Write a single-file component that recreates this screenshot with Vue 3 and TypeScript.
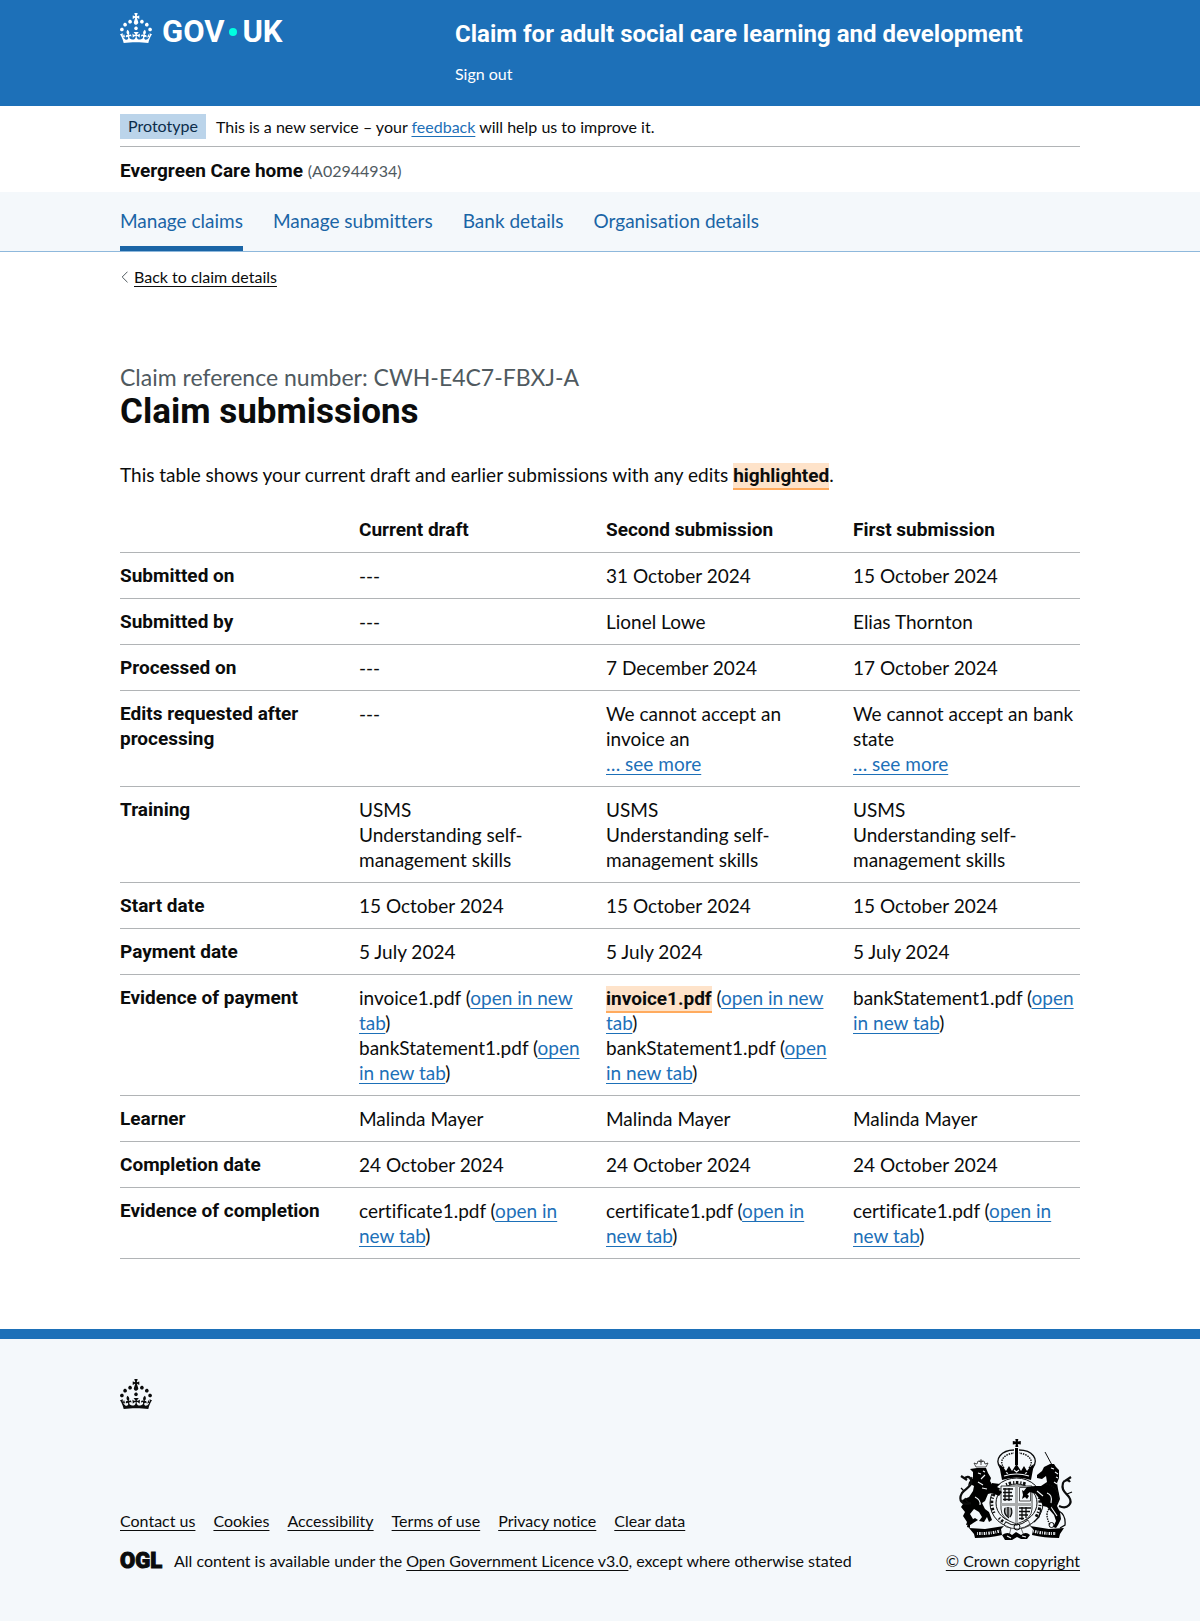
<script setup lang="ts">
interface FileLink { name: string; edited?: boolean }
interface Cell { lines?: string[]; more?: boolean; files?: FileLink[] }
interface Row { label: string; cells: Cell[] }

const crownPath =
  'M22.6 10.4c-1 .4-2-.1-2.4-1-.4-.9.1-2 1-2.4.9-.4 2 .1 2.4 1s-.1 2-1 2.4m-5.9 6.7c-.9.4-2-.1-2.4-1-.4-.9.1-2 1-2.4.9-.4 2 .1 2.4 1s-.1 2-1 2.4m10.8-3.7c-1 .4-2-.1-2.4-1-.4-.9.1-2 1-2.4.9-.4 2 .1 2.4 1s0 2-1 2.4m3.3 4.8c-1 .4-2-.1-2.4-1-.4-.9.1-2 1-2.4.9-.4 2 .1 2.4 1s-.1 2-1 2.4M17 4.7l2.3 1.2V2.5l-2.3.7-.2-.2.9-3h-3.4l.9 3-.2.2c-.1.1-2.3-.7-2.3-.7v3.4L15 4.7c.1.1.1.2.2.2l-1.3 4c-.1.2-.1.4-.1.6 0 1.1.8 2 1.9 2.2h.7c1-.2 1.9-1.1 1.9-2.1 0-.2 0-.4-.1-.6l-1.3-4c-.1-.2 0-.2.1-.3m-7.6 5.7c.9.4 2-.1 2.4-1 .4-.9-.1-2-1-2.4-.9-.4-2 .1-2.4 1s0 2 1 2.4m-5 3c.9.4 2-.1 2.4-1 .4-.9-.1-2-1-2.4-.9-.4-2 .1-2.4 1s.1 2 1 2.4m-3.2 4.8c.9.4 2-.1 2.4-1 .4-.9-.1-2-1-2.4-.9-.4-2 .1-2.4 1s0 2 1 2.4m14.8 11c4.4 0 8.6.3 12.3.8 1.1-4.5 2.4-7 3.7-8.8l-2.5-.9c.2 1.3.3 1.9 0 2.7-.4-.4-.8-1.1-1.1-2.3l-1.2 4c.7-.5 1.3-.8 2-.9-1.1 2.5-2.6 3.1-3.5 3-1.1-.2-1.7-1.2-1.5-2.1.3-1.2 1.5-1.5 2.1-.1 1.1-2.3-.8-3-2-2.3 1.9-1.9 2.1-3.5.6-5.6-2.1 1.6-2.1 3.2-1.2 5.5-1.2-1.4-3.2-.6-2.5 1.6.9-1.4 2.1-.5 1.9.8-.2 1.1-1.7 2.1-3.5 1.9-2.7-.2-2.9-2.1-2.9-3.6.7-.1 1.9.5 2.9 1.9l.4-4.3c-1.1 1.1-2.1 1.4-3.2 1.4.4-1.2 2.1-3 2.1-3h-5.4s1.7 1.9 2.1 3c-1.1 0-2.1-.2-3.2-1.4l.4 4.3c1-1.4 2.2-2 2.9-1.9-.1 1.5-.2 3.4-2.9 3.6-1.9.2-3.4-.8-3.5-1.9-.2-1.3 1-2.2 1.9-.8.7-2.3-1.2-3-2.5-1.6.9-2.2.9-3.9-1.2-5.5-1.5 2-1.3 3.7.6 5.6-1.2-.7-3.1 0-2 2.3.6-1.4 1.8-1.1 2.1.1.2.9-.3 1.9-1.5 2.1-.9.2-2.4-.5-3.5-3 .6 0 1.2.3 2 .9l-1.2-4c-.3 1.1-.7 1.9-1.1 2.3-.3-.8-.2-1.4 0-2.7l-2.9.9C1.3 23 2.6 25.5 3.7 30c3.7-.5 7.9-.8 12.3-.8'

const navItems = ['Manage claims', 'Manage submitters', 'Bank details', 'Organisation details']
const footerLinks = ['Contact us', 'Cookies', 'Accessibility', 'Terms of use', 'Privacy notice', 'Clear data']
const columns = ['Current draft', 'Second submission', 'First submission']

const text = (...values: string[]): Cell[] => values.map((v) => ({ lines: [v] }))
const same = (cell: Cell): Cell[] => [cell, cell, cell]

const rows: Row[] = [
  { label: 'Submitted on', cells: text('---', '31 October 2024', '15 October 2024') },
  { label: 'Submitted by', cells: text('---', 'Lionel Lowe', 'Elias Thornton') },
  { label: 'Processed on', cells: text('---', '7 December 2024', '17 October 2024') },
  {
    label: 'Edits requested after processing',
    cells: [
      { lines: ['---'] },
      { lines: ['We cannot accept an invoice an'], more: true },
      { lines: ['We cannot accept an bank state'], more: true },
    ],
  },
  { label: 'Training', cells: same({ lines: ['USMS', 'Understanding self-management skills'] }) },
  { label: 'Start date', cells: same({ lines: ['15 October 2024'] }) },
  { label: 'Payment date', cells: same({ lines: ['5 July 2024'] }) },
  {
    label: 'Evidence of payment',
    cells: [
      { files: [{ name: 'invoice1.pdf' }, { name: 'bankStatement1.pdf' }] },
      { files: [{ name: 'invoice1.pdf', edited: true }, { name: 'bankStatement1.pdf' }] },
      { files: [{ name: 'bankStatement1.pdf' }] },
    ],
  },
  { label: 'Learner', cells: same({ lines: ['Malinda Mayer'] }) },
  { label: 'Completion date', cells: same({ lines: ['24 October 2024'] }) },
  { label: 'Evidence of completion', cells: same({ files: [{ name: 'certificate1.pdf' }] }) },
]
</script>

<template>
  <div class="page">
    <header class="header">
      <div class="container header-inner">
        <a href="#" class="logo" aria-label="GOV.UK">
          <svg class="crown" viewBox="0 0 32 30" aria-hidden="true"><path :d="crownPath" /></svg>
          <span class="wordmark">GOV<i class="dot"></i>UK</span>
        </a>
        <div class="service">
          <a href="#" class="service-name">Claim for adult social care learning and development</a>
          <a href="#" class="sign-out">Sign out</a>
        </div>
      </div>
    </header>

    <div class="container">
      <div class="phase">
        <strong class="tag">Prototype</strong>
        <span>This is a new service – your <a href="#" class="link">feedback</a> will help us to improve it.</span>
      </div>
      <p class="organisation"><strong>Evergreen Care home</strong> <span>(A02944934)</span></p>
    </div>

    <nav class="nav">
      <ul class="container nav-list">
        <li v-for="(item, i) in navItems" :key="item">
          <a href="#" :class="{ active: i === 0 }">{{ item }}</a>
        </li>
      </ul>
    </nav>

    <main class="container main">
      <a href="#" class="back">
        <svg viewBox="0 0 7 12" aria-hidden="true"><path d="M6.5.7 1.2 6l5.3 5.3" /></svg>
        <span>Back to claim details</span>
      </a>
      <h1><span class="caption">Claim reference number: CWH-E4C7-FBXJ-A</span>Claim submissions</h1>
      <p class="intro">
        This table shows your current draft and earlier submissions with any edits <mark>highlighted</mark>.
      </p>
      <table>
        <thead>
          <tr>
            <td></td>
            <th v-for="c in columns" :key="c" scope="col">{{ c }}</th>
          </tr>
        </thead>
        <tbody>
          <tr v-for="row in rows" :key="row.label">
            <th scope="row">{{ row.label }}</th>
            <td v-for="(cell, i) in row.cells" :key="i">
              <div v-for="line in cell.lines" :key="line">{{ line }}</div>
              <a v-if="cell.more" href="#" class="link">… see more</a>
              <div v-for="f in cell.files" :key="f.name">
                <mark v-if="f.edited">{{ f.name }}</mark><template v-else>{{ f.name }}</template>
                (<a href="#" class="link">open in new tab</a>)
              </div>
            </td>
          </tr>
        </tbody>
      </table>
    </main>

    <footer class="footer">
      <div class="container">
        <svg class="crown" viewBox="0 0 32 30" aria-hidden="true"><path :d="crownPath" /></svg>
        <div class="footer-row">
          <div class="footer-meta">
            <ul class="footer-links">
              <li v-for="l in footerLinks" :key="l"><a href="#">{{ l }}</a></li>
            </ul>
            <div class="licence">
              <span class="ogl">OGL</span>
              <span>All content is available under the <a href="#">Open Government Licence v3.0</a>, except where otherwise stated</span>
            </div>
          </div>
          <a href="#" class="copyright">
            <svg class="arms" viewBox="0 0 117 102" aria-hidden="true">
              <!-- royal crown -->
              <path d="M57.3 1h3l-.5 2.6 3-.5v3.4l-3-.5.5 3h-3l.5-3-3 .5V3.100l3 .5zM57 10h3v17h-3z" />
              <path class="line mid" d="M43 31C35 21 44 12 56 12M74 31c8-10 0-19-13-19" />
              <path class="line fine dots" d="M46 30c-6-8 1-14 10-15M71 30c6-8-1-14-10-15" />
              <path d="M41 26l4 3 3 4 3-5 3 5 4.500-7 4.500 7 3-5 3 5 3-4 4-3-3 16q-14.500-5-29 0z" />
              <path class="cut" d="M46 38q12.500-4 25 0M48 34.500l2 1M56 32l2.500 2 2.500-2M67 35.500l2-1" />
              <!-- garter and shield -->
              <ellipse class="line" cx="58.500" cy="65" rx="26.500" ry="25" />
              <ellipse class="line" cx="58.500" cy="65" rx="20.500" ry="19" />
              <path class="line letters" d="M36 75q-6-14 4-24M48 46.500q10-4 21 0M78 53q8 12 0 26M41 80q5 5 9 6" />
              <path class="shield" d="M43 48h31v23q0 10-15.500 15Q43 81 43 71z" />
              <path class="grey" d="M57 48h3v17h14v3H60v17h-3V68H43v-3h14z" />
              <path class="line mid" d="M45 51h10M45 54.500h9M45 58h10M45 61.500h9M47 50v13M51 50v13M61 70h12M61 73.500h11M61 77h9M61 80.500h5M64 69v13M68 69v11" />
              <path class="line fine" d="M61.500 49.500h11V63h-11z" />
              <path d="M64 52l3 2 2-3 2 3-2 2 2 2-2 3-2-2-3 2 1-4z" />
              <path class="grey" d="M47 69h6q3 5-1 10-6-1-6-6z" />
              <path class="line mid" d="M47 70q-2 6 4 10M50 69v10M53 70q2 5-1 9" />
              <!-- buckle -->
              <path class="white" d="M48 84q10 7 22-2l2 4q-6 4-9 4l3 8H51l2-8q-5 0-7-3z" />
              <path class="line fine" d="M48 84q10 7 22-2M46 87q13 8 27 0" />
              <circle class="line" cx="59" cy="89" r="3" />
              <path d="M44 97q6-4 10 0l4-3 5 3q5-4 9 0l-3 4h-6l-4-2-5 3h-7z" />
              <path class="cut" d="M49 98l4 2M64 98l4 1" />
              <!-- lion -->
              <path class="line fine" d="M18 29l-2-4 3 1 1-3 3 1 3-1 1 3 3-1-2 4zM23 21v6M21 23h4" />
              <path d="M19 30l9 0 2 5 3 5-1 3 3 5 9 6-3 4-7-3-4 1-3 7-3 2 3 6 4 3 3 8-3 2-2-5-3 5-5-1 3-4-3-5-5-3-4 5 3 5-1 5-6 1 1-3-4-6 2-4-4-5 2-3-1-4 7-3 4-6 1-5-4-2-2 2 1-4 4-4 0-6-3-3z" />
              <path d="M34 45l8 1-3 3 4 2-6 2-3-4zM20 82l-8 5 0 3-3-1 1-5 7-4z" />
              <path class="line thick" d="M13 65C4 68 0 62 4 55c4-5 11-7 9-13-1-4-5-4-7-1M3 38l6 4" />
              <path class="line mid" d="M13 66q-5-2-6-6M6 53l-3-3M13 43l1-4" />
              <path class="cut" d="M20 35l3 1M27 37l-4 4M20 44l5 3M24 50l5 1M17 59q6 3 5 8M25 33l2 1" />
              <!-- unicorn -->
              <path class="line" d="M87 14l7 13" />
              <path d="M92 26l4 0 2 3 3 3 0 8-2 5 1 6 1 5 1 5-3 7 3 6 1 7-3 6-2 3-3-1 3-6-2-6-7-8-4-1-3-6-4-6-6-2-5 4-2-4 4-5 8-1 6 0 6-4-1-6-4 3-5-1 0-3 5-4 2-4z" />
              <path class="line thick" d="M101 68c9 4 14-3 10-9-4-5-8-7-6-14 1-3 5-4 7-1M113 39l-6 4" />
              <path class="line mid" d="M109 56l5-2M101 73q7 4 6 14l-5 3M83 71l-2 8-5 5" />
              <path class="cut" d="M93 30l3 1M97 34l3 2M98 39l2 1M96 44l3 2M79 53l6 5M89 55q6 2 4 10M93 69l6 9" />
              <path class="line chain" d="M88 46q10 2 12 10t-8 14q-6 5 0 17" />
              <circle class="line" cx="93.500" cy="87" r="2.500" />
              <!-- motto scroll -->
              <path d="M11 90l16 1 19-3-3 3 1 6q-12 3-27 3l-1-4zM106 90l-15 1-19-3 3 3-1 6q12 3 27 3l1-4z" />
              <path class="cut scroll" d="M19 95.500q12 .5 23-2.500M75 93q11 3 23 2.500" />
            </svg>
            <span>© Crown copyright</span>
          </a>
        </div>
      </div>
    </footer>
  </div>
</template>

<style>
body {
  margin: 0;
}
</style>

<style scoped>
.page {
  font-family: Lato, "Liberation Sans", sans-serif;
  font-size: 19px;
  line-height: 25px;
  font-variant-ligatures: none;
  color: #0b0c0c;
  background: #fff;
}
.wordmark,
.service-name,
.organisation strong,
.ogl,
h1,
th,
mark {
  font-family: Roboto, "Liberation Sans", sans-serif;
}
.container {
  max-width: 960px;
  margin: 0 auto;
}
a {
  color: inherit;
  text-underline-offset: 3px;
  text-decoration-thickness: 1px;
}
ul {
  list-style: none;
  padding: 0;
}
.link {
  color: #1d70b8;
}
.crown {
  display: block;
  width: 32px;
  height: 30px;
  fill: currentColor;
}

.header {
  background: #1d70b8;
  color: #fff;
}
.header a {
  text-decoration: none;
}
.header-inner {
  display: flex;
  padding: 13px 0 22px;
}
.logo {
  display: flex;
  align-items: flex-start;
  width: 335px;
}
.wordmark {
  display: flex;
  align-items: center;
  margin-left: 10px;
  font-size: 31px;
  line-height: 38px;
  font-weight: 700;
}
.dot {
  width: 8px;
  height: 8px;
  margin: 0 5px;
  border-radius: 50%;
  background: #00ffe0;
}
.service {
  display: flex;
  flex-direction: column;
  align-items: flex-start;
  gap: 15px;
  padding-top: 6px;
}
.service-name {
  font-size: 24px;
  line-height: 30px;
  font-weight: 700;
}
.sign-out {
  font-size: 16px;
  line-height: 20px;
}

.phase {
  display: flex;
  align-items: center;
  gap: 10px;
  padding: 8px 0 7px;
  border-bottom: 1px solid #b1b4b6;
  font-size: 16px;
  line-height: 20px;
}
.tag {
  padding: 2px 8px 3px;
  background: #bbd4ea;
  color: #0c2d4a;
  font-weight: 400;
}
.organisation {
  margin: 0;
  padding: 10px 0 9px;
}
.organisation span {
  font-size: 16px;
  color: #505a5f;
}

.nav {
  background: #f4f8fb;
  border-bottom: 1px solid #8eb8dc;
}
.nav-list {
  display: flex;
  gap: 30px;
}
.nav-list a {
  display: block;
  padding: 16px 0 13px;
  border-bottom: 5px solid transparent;
  color: #1a65a6;
  text-decoration: none;
}
.nav-list a.active {
  border-color: #1a65a6;
}

.main {
  padding: 15px 0 70px;
}
.back {
  display: flex;
  width: fit-content;
  align-items: center;
  gap: 6px;
  font-size: 16px;
  line-height: 20px;
  text-decoration: none;
}
.back svg {
  width: 7px;
  height: 12px;
  margin-left: 1px;
  fill: none;
  stroke: #505a5f;
}
.back span {
  text-decoration: underline;
  text-decoration-thickness: 1px;
  text-underline-offset: 3px;
}
h1 {
  margin: 75px 0 30px;
  font-size: 35px;
  line-height: 40px;
}
.caption {
  display: block;
  font-family: Lato, "Liberation Sans", sans-serif;
  font-size: 23px;
  line-height: 30px;
  font-weight: 400;
  color: #505a5f;
}
.intro {
  margin: 0 0 20px;
}
mark {
  padding: 1px 0;
  border-bottom: 2px solid #ffab5e;
  background: #fee3ca;
  color: #0b0c0c;
  font-weight: 700;
  line-height: 1;
}
table {
  width: 100%;
  border-collapse: collapse;
  table-layout: fixed;
}
th,
td {
  padding: 10px 20px 10px 0;
  border-bottom: 1px solid #b1b4b6;
  text-align: left;
  vertical-align: top;
}
thead td {
  width: 219px;
}
thead th {
  width: 227px;
}
tr > :last-child {
  padding-right: 0;
}

.footer {
  padding: 40px 0 50px;
  border-top: 10px solid #1d70b8;
  background: #f4f8fb;
  font-size: 16px;
  line-height: 20px;
}
.footer-row {
  display: flex;
  justify-content: space-between;
  align-items: flex-end;
  margin-top: 29px;
}
.footer-links {
  display: flex;
  gap: 18px;
  margin: 0 0 20px;
}
.licence {
  display: flex;
  align-items: center;
  gap: 13px;
}
.ogl {
  width: 41px;
  font-size: 22px;
  font-weight: 900;
  -webkit-text-stroke: 1px currentColor;
}
.copyright {
  display: flex;
  flex-direction: column;
  align-items: flex-end;
  gap: 11px;
}
.arms {
  width: 117px;
  height: 102px;
  margin-right: 5px;
}
.line {
  fill: none;
  stroke: #0b0c0c;
  stroke-width: 1;
}
.line.thick {
  stroke-width: 2.2;
}
.line.mid {
  stroke-width: 1.3;
}
.line.fine {
  stroke-width: 0.7;
}
.line.dots,
.line.chain {
  stroke-width: 1.4;
  stroke-dasharray: 1.5 1;
}
.line.letters {
  stroke-width: 3;
  stroke-dasharray: 1.2 1.6 2.5 2;
}
.cut {
  fill: none;
  stroke: #f4f8fb;
  stroke-width: 1.1;
}
.cut.scroll {
  stroke-width: 3;
  stroke-dasharray: 0.8 1.3 1.5 1;
}
.shield {
  fill: #f4f8fb;
  stroke: #0b0c0c;
  stroke-width: 0.8;
}
.white {
  fill: #f4f8fb;
  stroke: #0b0c0c;
  stroke-width: 0.6;
}
.grey {
  fill: #a9acad;
}
</style>
